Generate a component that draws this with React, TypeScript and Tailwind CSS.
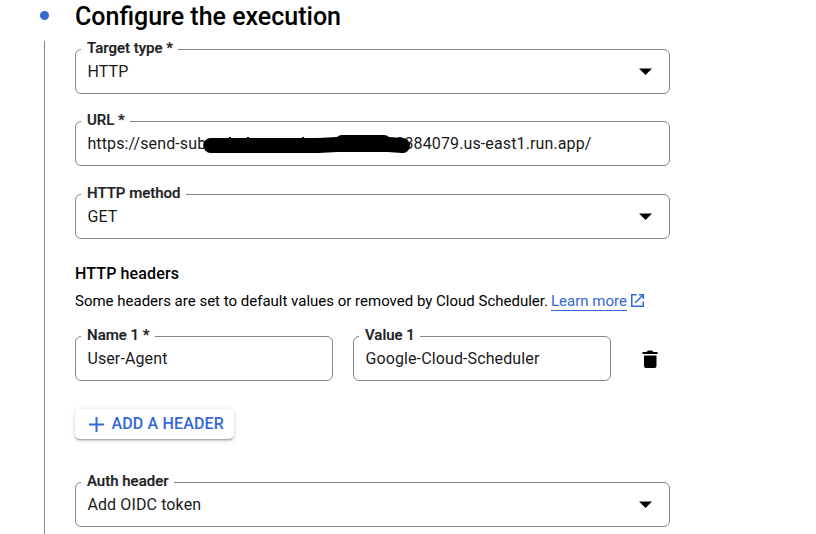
import type { ReactNode } from "react";

function Field({ label, children, className = "", notch, dropdown = false }: {
  label: string;
  children: ReactNode;
  className?: string;
  notch: string;
  dropdown?: boolean;
}) {
  return (
    <div className={`relative flex h-[45px] items-center justify-between rounded-[6px] border border-[#80868b] pl-[11.400px] pr-[17px] ${className}`}>
      <span className={`absolute -top-[11px] left-[5px] h-[18px] whitespace-nowrap bg-white pl-[6px] text-[15px] font-medium leading-[18px] text-[#202124] [-webkit-text-stroke:0.2px_#202124] ${notch}`}>
        {label}
      </span>
      <div className="flex items-center whitespace-nowrap text-[16px] leading-6 tracking-[0.12px] text-[#1a1a1a]">{children}</div>
      {dropdown && (
        <svg width="14" height="7" viewBox="0 0 14 7" className="shrink-0">
          <path d="M1 0.500h13L7.500 7z" fill="#000" />
        </svg>
      )}
    </div>
  );
}

function Redaction() {
  return (
    <svg width="208" height="20" viewBox="0 0 208 20" className="absolute left-[127px] top-[12px]">
      <path d="M7.700 11.500H115L134 10.500H185L199.500 11.500" fill="none" stroke="#000" strokeWidth="15" strokeLinecap="round" strokeLinejoin="round" />
      <path d="M139 8.500H181" fill="none" stroke="#000" strokeWidth="15" strokeLinecap="round" />
      <path d="M26 3.500h2M44 3.500h2M99 3.500h2" stroke="#000" strokeWidth="1" />
    </svg>
  );
}

export default function App() {
  return (
    <div className="flex h-[534px] w-[816px] overflow-hidden bg-white font-[Roboto,sans-serif] text-black">
      <div className="flex w-[75px] shrink-0 flex-col pl-[39.500px] pt-[11px]">
        <span className="h-[9px] w-[9px] rounded-full bg-[#3367d6]" />
        <span className="ml-[4.500px] mt-[21px] w-px flex-1 bg-[#80868b]" />
      </div>
      <main className="w-[595px] shrink-0">
        <h1 className="h-[49px] whitespace-nowrap pt-px text-[25px] font-medium leading-8">Configure the execution</h1>
        <Field label="Target type *" notch="w-[97px]" dropdown>HTTP</Field>
        <Field label="URL *" notch="w-[49px]" className="mt-[27px]">
          <span className="w-[308px]">https://send-sub</span>
          <span>8384079.us-east1.run.app/</span>
          <Redaction />
        </Field>
        <Field label="HTTP method" notch="w-[105px]" className="mt-[28px]" dropdown>GET</Field>
        <h2 className="mt-[23px] text-[16px] font-medium leading-6 tracking-[0.130px]">HTTP headers</h2>
        <p className="mt-[5px] flex h-5 whitespace-nowrap text-[15px] leading-5">
          <span className="w-[476px]">Some headers are set to default values or removed by Cloud Scheduler.</span>
          <a className="h-[20px] w-[76px] border-b border-[#3367d6] text-[#3367d6]">Learn more</a>
          <svg width="13" height="13" viewBox="0 0 13 13" className="ml-[4px] mt-[3px]" fill="none" stroke="#3367d6" strokeWidth="1.500">
            <path d="M5.500 .75H.75v11.500h11.500V7.500M8 .75h4.250V5M12 1L4 9" />
          </svg>
        </p>
        <div className="mt-[25px] flex">
          <Field label="Name 1 *" notch="w-[74px]" className="w-[258px]">User-Agent</Field>
          <Field label="Value 1" notch="w-[61px]" className="ml-5 w-[258px]">Google-Cloud-Scheduler</Field>
          <svg width="16" height="18" viewBox="0 0 16 18" className="ml-[31px] mt-[14px] shrink-0">
            <path d="M.5 2H4.500L6 .5h4L11.500 2H15.500v2H.5zM2 5.500h12.500V16Q14.500 18 12.500 18H4Q2 18 2 16z" />
          </svg>
        </div>
        <button className="mt-[28px] flex h-[30px] w-[159px] items-center rounded-[5px] bg-white pl-[14px] text-[16px] font-medium tracking-[0.150px] text-[#3367d6] shadow-[0_2px_2px_-1px_rgba(0,0,0,0.35),0_1px_5px_rgba(0,0,0,0.18)]">
          <svg width="15" height="15" viewBox="0 0 15 15" className="mr-[7.500px] shrink-0"><path d="M0 7.500h15M7.500 0v15" stroke="#3367d6" strokeWidth="2" /></svg>
          <span className="whitespace-nowrap">ADD A HEADER</span>
        </button>
        <Field label="Auth header" notch="w-[93px]" className="mt-[43px]" dropdown>Add OIDC token</Field>
      </main>
    </div>
  );
}
